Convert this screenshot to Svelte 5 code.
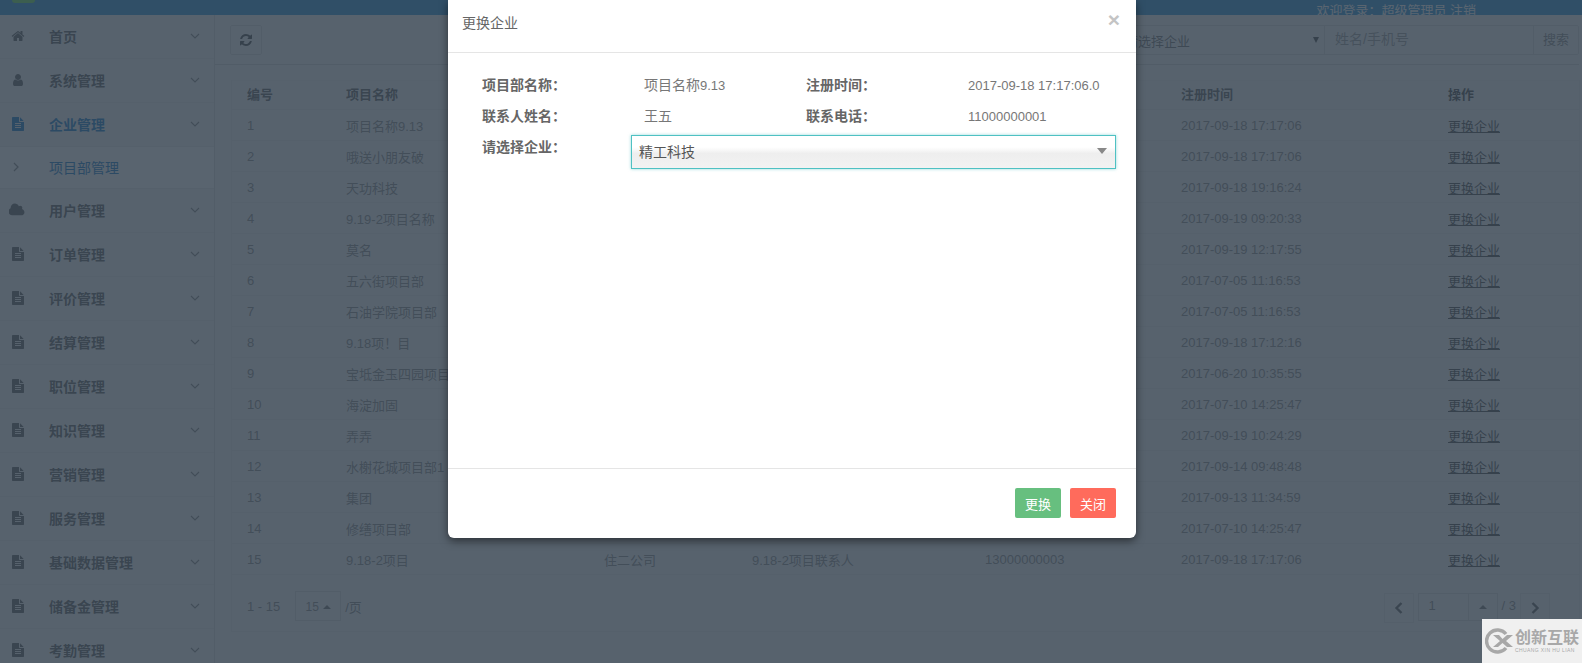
<script>
  const icons = {
    home: { box: '0 0 1792 1792', d: 'M1472 992v480q0 26-19 45t-45 19h-384v-384h-256v384h-384q-26 0-45-19t-19-45v-480q0-1 .5-3t.5-3l575-474 575 474q1 2 1 6zm223-69l-62 74q-8 9-21 11h-3q-13 0-21-7l-692-577-692 577q-12 8-24 7-13-2-21-11l-62-74q-8-10-7-23.5t11-21.5l719-599q32-26 76-26t76 26l244 204v-195q0-14 9-23t23-9h192q14 0 23 9t9 23v408l219 182q10 8 11 21.5t-7 23.5z' },
    user: { box: '0 0 1792 1792', d: 'M1536 1399q0 109-62.5 187t-150.5 78h-854q-88 0-150.5-78t-62.5-187q0-85 8.5-160.5t31.5-152 58.5-131 94-89 134.5-34.5q131 128 313 128t313-128q76 0 134.5 34.5t94 89 58.5 131 31.5 152 8.5 160.5zm-256-887q0 159-112.5 271.5t-271.5 112.5-271.5-112.5-112.5-271.5 112.5-271.5 271.5-112.5 271.5 112.5 112.5 271.5z' },
    cloud: { box: '0 0 1920 1792', d: 'M1856 1152q0 159-112.5 271.5t-271.5 112.5h-1088q-185 0-316.5-131.5t-131.5-316.5q0-132 71-241.5t187-163.5q-2-28-2-43 0-212 150-362t362-150q158 0 286.5 88t187.5 230q70-62 166-62 106 0 181 75t75 181q0 75-41 138 129 30 213 134.5t84 239.5z' },
    file: { box: '0 0 1792 1792', d: 'M1596 476q14 14 28 36h-472v-472q22 14 36 28zm-476 164h544v1056q0 40-28 68t-68 28h-1344q-40 0-68-28t-28-68v-1600q0-40 28-68t68-28h800v544q0 40 28 68t68 28zm160 736v-64q0-14-9-23t-23-9h-704q-14 0-23 9t-9 23v64q0 14 9 23t23 9h704q14 0 23-9t9-23zm0-256v-64q0-14-9-23t-23-9h-704q-14 0-23 9t-9 23v64q0 14 9 23t23 9h704q14 0 23-9t9-23zm0-256v-64q0-14-9-23t-23-9h-704q-14 0-23 9t-9 23v64q0 14 9 23t23 9h704q14 0 23-9t9-23z' }
  };
  const refresh = 'M1639 1056q0 5-1 7-64 268-268 434.5t-478 166.5q-146 0-282.5-55t-243.5-157l-129 129q-19 19-45 19t-45-19-19-45v-448q0-26 19-45t45-19h448q26 0 45 19t19 45-19 45l-137 137q71 66 161 102t187 36q134 0 250-65t186-179q11-17 53-117 8-23 30-23h192q13 0 22.5 9.5t9.5 22.5zm25-800v448q0 26-19 45t-45 19h-448q-26 0-45-19t-19-45 19-45l138-138q-148-137-349-137-134 0-250 65t-186 179q-11 17-53 117-8 23-30 23h-199q-13 0-22.5-9.5t-9.5-22.5v-7q65-268 270-434.5t480-166.5q146 0 284 55.5t245 156.5l130-129q19-19 45-19t45 19 19 45z';

  const menu = [
    { label: '首页', icon: 'home' },
    { label: '系统管理', icon: 'user' },
    { label: '企业管理', icon: 'file', active: true },
    { label: '项目部管理', sub: true },
    { label: '用户管理', icon: 'cloud' },
    { label: '订单管理', icon: 'file' },
    { label: '评价管理', icon: 'file' },
    { label: '结算管理', icon: 'file' },
    { label: '职位管理', icon: 'file' },
    { label: '知识管理', icon: 'file' },
    { label: '营销管理', icon: 'file' },
    { label: '服务管理', icon: 'file' },
    { label: '基础数据管理', icon: 'file' },
    { label: '储备金管理', icon: 'file' },
    { label: '考勤管理', icon: 'file' }
  ];

  const rows = [
    ['项目名称9.13', '2017-09-18 17:17:06'],
    ['哦送小朋友破', '2017-09-18 17:17:06'],
    ['天功科技', '2017-09-18 19:16:24'],
    ['9.19-2项目名称', '2017-09-19 09:20:33'],
    ['莫名', '2017-09-19 12:17:55'],
    ['五六街项目部', '2017-07-05 11:16:53'],
    ['石油学院项目部', '2017-07-05 11:16:53'],
    ['9.18项！目', '2017-09-18 17:12:16'],
    ['宝坻金玉四园项目', '2017-06-20 10:35:55'],
    ['海淀加固', '2017-07-10 14:25:47'],
    ['弄弄', '2017-09-19 10:24:29'],
    ['水榭花城项目部1', '2017-09-14 09:48:48'],
    ['集团', '2017-09-13 11:34:59'],
    ['修缮项目部', '2017-07-10 14:25:47'],
    ['9.18-2项目', '2017-09-18 17:17:06', '住二公司', '9.18-2项目联系人', '13000000003']
  ];
</script>

<div class="page">
  <header class="topbar">
    <span class="logo"></span>
    <span class="welcome">欢迎登录：超级管理员 注销</span>
  </header>

  <div class="body">
    <nav class="side">
      {#each menu as item}
        <div class="item" class:sub={item.sub} class:active={item.active}>
          <span class="ico">
            {#if item.sub}
              <svg class="chev-r" viewBox="0 0 8 12"><path d="M2 2l4 4-4 4" /></svg>
            {:else}
              <svg class="glyph" class:wide={item.icon === 'cloud'} viewBox={icons[item.icon].box}><path d={icons[item.icon].d} /></svg>
            {/if}
          </span>
          <span class="label">{item.label}</span>
          {#if !item.sub}
            <svg class="chev-d" viewBox="0 0 12 8"><path d="M2 2l4 4 4-4" /></svg>
          {/if}
        </div>
      {/each}
    </nav>

    <main class="content">
      <div class="toolbar">
        <button class="refresh" aria-label="刷新">
          <svg viewBox="0 0 1792 1792"><path d={refresh} /></svg>
        </button>
        <div class="filters">
          <div class="fselect"><span>请选择企业</span><i class="fcaret"></i></div>
          <div class="finput">姓名/手机号</div>
          <div class="fbtn">搜索</div>
        </div>
      </div>

      <section class="panel">
        <div class="trow thead">
          <span class="c1">编号</span>
          <span class="c2">项目名称</span>
          <span class="c3"></span>
          <span class="c4"></span>
          <span class="c5"></span>
          <span class="c6">注册时间</span>
          <span class="c7">操作</span>
        </div>
        {#each rows as r, i}
          <div class="trow">
            <span class="c1">{i + 1}</span>
            <span class="c2">{r[0]}</span>
            <span class="c3">{r[2] ?? ''}</span>
            <span class="c4">{r[3] ?? ''}</span>
            <span class="c5">{r[4] ?? ''}</span>
            <span class="c6">{r[1]}</span>
            <span class="c7"><u>更换企业</u></span>
          </div>
        {/each}
        <div class="pager">
          <div class="pleft">
            <span>1 - 15</span>
            <div class="psize">15 <i class="up"></i></div>
            <span class="per">/页</span>
          </div>
          <div class="pright">
            <div class="parrow"><svg viewBox="0 0 10 14"><path d="M7.5 2l-5 5 5 5" /></svg></div>
            <div class="pnum"><span class="pval">1</span><span class="pdrop"><i class="up"></i></span></div>
            <span class="ptotal">/ 3</span>
            <div class="parrow"><svg viewBox="0 0 10 14"><path d="M2.5 2l5 5-5 5" /></svg></div>
          </div>
        </div>
      </section>
    </main>
  </div>

  <div class="overlay">
    <div class="modal">
      <div class="mhead">
        <span class="mtitle">更换企业</span>
        <span class="mclose">×</span>
      </div>
      <div class="mbody">
        <div class="info">
          <b>项目部名称：</b><span>项目名称<small>9.13</small></span>
          <b>注册时间：</b><span><small>2017-09-18 17:17:06.0</small></span>
          <b>联系人姓名：</b><span>王五</span>
          <b>联系电话：</b><span><small>11000000001</small></span>
        </div>
        <div class="pick">
          <b>请选择企业：</b>
          <div class="mselect"><span>精工科技</span><i class="mcaret"></i></div>
        </div>
      </div>
      <div class="mfoot">
        <button class="btn green">更换</button>
        <button class="btn red">关闭</button>
      </div>
    </div>
  </div>

  <div class="mark">
    <svg class="mlogo" viewBox="0 0 28 26">
      <path d="M21 6A11 11 0 1 0 21 20" />
      <path class="x" d="M8 7h6l3.5 4L22 7h6l-7 6 7 6h-6l-4.500-4L13 19H8l7-6z" />
    </svg>
    <div class="mtext">
      <div class="mcn">创新互联</div>
      <div class="men">CHUANG XIN HU LIAN</div>
    </div>
  </div>
</div>

<style>
  :global(body) {
    margin: 0;
    overflow: hidden;
    background: #f3f3f3;
  }
  .page {
    position: relative;
    width: 1582px;
    height: 663px;
    overflow: hidden;
    font-family: "Liberation Sans", "Noto Sans CJK SC", sans-serif;
    font-size: 14px;
    color: #666;
    background: #f3f3f3;
  }
  .topbar {
    height: 15px;
    background: #4a9fd8;
    overflow: hidden;
    display: flex;
    justify-content: space-between;
    padding: 0 106px 0 12px;
    box-sizing: border-box;
  }
  .logo {
    width: 23px;
    height: 3px;
    background: #7fe06f;
    border-radius: 0 0 4px 4px;
  }
  .welcome {
    color: #fff;
    font-size: 13px;
    line-height: 21px;
    height: 21px;
    flex: none;
  }
  .body {
    display: flex;
    height: 648px;
  }
  .side {
    width: 214px;
    flex: none;
    border-right: 1px solid #dcdcdc;
    background: #f3f3f3;
    box-sizing: content-box;
  }
  .item {
    height: 44px;
    box-sizing: border-box;
    display: flex;
    align-items: center;
    padding-bottom: 2px;
    border-bottom: 1px solid #e8e8e8;
    color: #777;
    font-weight: 600;
    font-size: 14px;
  }
  .item.active {
    color: #3a8ccc;
  }
  .item.sub {
    background: #f8f8f8;
    color: #3a8ccc;
    font-weight: 400;
    height: 42px;
  }
  .ico {
    width: 49px;
    padding-left: 9px;
    box-sizing: border-box;
    flex: none;
    display: flex;
    align-items: center;
  }
  .glyph {
    width: 14px;
    height: 14px;
    margin-left: 2px;
    fill: currentColor;
  }
  .glyph.wide {
    width: 16px;
    height: 16px;
    margin-left: 0;
  }
  .chev-r {
    width: 8px;
    height: 12px;
    margin-left: 3px;
    fill: none;
    stroke: #999;
    stroke-width: 1.2;
  }
  .label {
    flex: 1;
  }
  .chev-d {
    width: 12px;
    height: 8px;
    margin-right: 13px;
    fill: none;
    stroke: #999;
    stroke-width: 1.2;
  }
  .content {
    flex: 1;
    min-width: 0;
    padding-right: 3px;
  }
  .toolbar {
    height: 50px;
    box-sizing: border-box;
    border-bottom: 1px solid #d8d8d8;
    display: flex;
    align-items: flex-start;
    justify-content: space-between;
    padding: 10px 0 0 15px;
  }
  .refresh {
    width: 32px;
    height: 30px;
    padding: 0;
    background: #f3f3f3;
    border: 1px solid #dcdcdc;
    border-radius: 2px;
    color: #666;
    display: flex;
    align-items: center;
    justify-content: center;
  }
  .refresh svg {
    width: 14px;
    height: 14px;
    fill: currentColor;
  }
  .filters {
    display: flex;
    height: 30px;
    border: 1px solid #dcdcdc;
    border-radius: 2px;
    box-sizing: border-box;
    font-size: 13px;
  }
  .fselect {
    width: 220px;
    display: flex;
    align-items: center;
    justify-content: space-between;
    padding: 0 5px 0 20px;
    box-sizing: border-box;
    border-right: 1px solid #dcdcdc;
    color: #888;
  }
  .fcaret {
    width: 0;
    height: 0;
    border: 3px solid transparent;
    border-top: 6px solid #666;
    border-bottom: 0;
  }
  .finput {
    width: 209px;
    padding-left: 10px;
    box-sizing: border-box;
    line-height: 26px;
    color: #aaa;
    font-size: 14px;
    border-right: 1px solid #dcdcdc;
  }
  .fbtn {
    width: 44px;
    text-align: center;
    line-height: 28px;
    color: #999;
  }
  .panel {
    margin: 15px 0 0 16px;
    border: 1px solid #e8e8e8;
    border-top: 1px solid #ececec;
    height: 552px;
    box-sizing: border-box;
    width: 1349px;
  }
  .trow {
    height: 31px;
    display: flex;
    align-items: center;
    border-bottom: 1px solid #e8e8e8;
    box-sizing: border-box;
    font-size: 13px;
    color: #9a9a9a;
  }
  .thead {
    height: 29px;
    padding-bottom: 3px;
    font-weight: 600;
    color: #777;
  }
  .trow span { flex: none; }
  .c1 { width: 114px; padding-left: 15px; box-sizing: border-box; }
  .c2 { width: 258px; white-space: nowrap; }
  .c3 { width: 148px; }
  .c4 { width: 233px; }
  .c5 { width: 196px; }
  .c6 { width: 267px; }
  .c7 { width: 100px; color: #666; }
  .pager {
    display: flex;
    justify-content: space-between;
    align-items: flex-start;
    padding: 16px 29px 0 15px;
    font-size: 13px;
    color: #999;
  }
  .pleft {
    display: flex;
    align-items: center;
    height: 30px;
  }
  .psize {
    width: 46px;
    height: 30px;
    margin-left: 15px;
    box-sizing: border-box;
    border: 1px solid #dcdcdc;
    display: flex;
    align-items: center;
    justify-content: center;
    gap: 4px;
    padding-top: 2px;
    font-size: 12px;
    color: #999;
  }
  .per { margin-left: 4px; }
  .up {
    display: inline-block;
    width: 0;
    height: 0;
    border: 4px solid transparent;
    border-bottom: 4px solid #888;
    border-top: 0;
  }
  .pright {
    display: flex;
    align-items: flex-start;
    margin-top: 2px;
  }
  .parrow {
    width: 30px;
    height: 30px;
    box-sizing: border-box;
    border: 1px solid #e4e4e4;
    display: flex;
    align-items: center;
    justify-content: center;
  }
  .parrow svg {
    width: 10px;
    height: 14px;
    fill: none;
    stroke: #777;
    stroke-width: 2.4;
  }
  .pnum {
    display: flex;
    width: 80px;
    height: 28px;
    margin-left: 4px;
    box-sizing: border-box;
    border: 1px solid #dcdcdc;
  }
  .pval {
    width: 50px;
    padding-left: 10px;
    box-sizing: border-box;
    line-height: 24px;
    border-right: 1px solid #dcdcdc;
  }
  .pdrop {
    flex: 1;
    display: flex;
    align-items: center;
    justify-content: center;
  }
  .ptotal {
    margin: 0 4px;
    line-height: 26px;
    color: #999;
  }
  .overlay {
    position: absolute;
    inset: 0;
    background: rgba(40, 54, 69, 0.77);
    padding: 0 446px 125px 448px;
    box-sizing: border-box;
  }
  .modal {
    height: 538px;
    background: #fff;
    border-radius: 0 0 6px 6px;
    box-shadow: 0 3px 9px rgba(0, 0, 0, 0.5);
    display: flex;
    flex-direction: column;
  }
  .mhead {
    height: 53px;
    flex: none;
    box-sizing: border-box;
    border-bottom: 1px solid #e5e5e5;
    display: flex;
    justify-content: space-between;
    padding: 13px 15px 0 14px;
  }
  .mtitle {
    font-size: 14px;
    line-height: 20px;
    color: #666;
  }
  .mclose {
    font-size: 21px;
    font-weight: 700;
    line-height: 14px;
    color: #c4c4c4;
    margin-right: 1px;
  }
  .mbody {
    flex: 1;
    padding: 22px 20px 0 34px;
    font-size: 14px;
    color: #777;
  }
  .mbody b {
    font-weight: 600;
    color: #666;
  }
  .mbody small {
    font-size: 13px;
  }
  .info {
    display: grid;
    grid-template-columns: 162px 162px 162px 1fr;
    grid-auto-rows: 31px;
    line-height: 20px;
  }
  .pick {
    display: grid;
    grid-template-columns: 149px 1fr;
    margin-top: -2px;
  }
  .pick b {
    line-height: 24px;
  }
  .mselect {
    height: 34px;
    box-sizing: border-box;
    border: 1px solid #4fc1c3;
    background: linear-gradient(#fff, #fff 35%, #eee 55%, #f2f2f2);
    display: flex;
    align-items: center;
    justify-content: space-between;
    padding: 0 8px 2px 7px;
    color: #555;
    box-shadow: 0 0 3px rgba(79, 193, 195, 0.6);
  }
  .mcaret {
    width: 0;
    height: 0;
    border: 5px solid transparent;
    border-top: 6px solid #888;
    border-bottom: 0;
  }
  .mfoot {
    flex: none;
    height: 70px;
    box-sizing: border-box;
    border-top: 1px solid #e5e5e5;
    display: flex;
    justify-content: flex-end;
    gap: 9px;
    padding: 19px 20px 0 0;
  }
  .btn {
    width: 46px;
    height: 30px;
    padding: 0;
    border: 0;
    border-radius: 2px;
    color: #fff;
    font: 13px "Liberation Sans", "Noto Sans CJK SC", sans-serif;
  }
  .green { background: #67bf7f; }
  .red { background: #ff6b5c; }
  .mark {
    position: absolute;
    right: 0;
    bottom: 0;
    width: 100px;
    height: 44px;
    background: #f0f0f0;
    display: flex;
    align-items: center;
    gap: 2px;
    padding-left: 3px;
    box-sizing: border-box;
  }
  .mlogo {
    width: 28px;
    height: 26px;
    flex: none;
    fill: none;
    stroke: #a8a8a8;
    stroke-width: 3.4;
  }
  .mlogo .x {
    fill: #a8a8a8;
    stroke: none;
  }
  .mtext {
    color: #a8a8a8;
    white-space: nowrap;
  }
  .mcn {
    font-size: 16px;
    font-weight: 700;
    line-height: 18px;
  }
  .men {
    font-size: 5px;
    line-height: 6px;
    letter-spacing: 0.4px;
  }
</style>
